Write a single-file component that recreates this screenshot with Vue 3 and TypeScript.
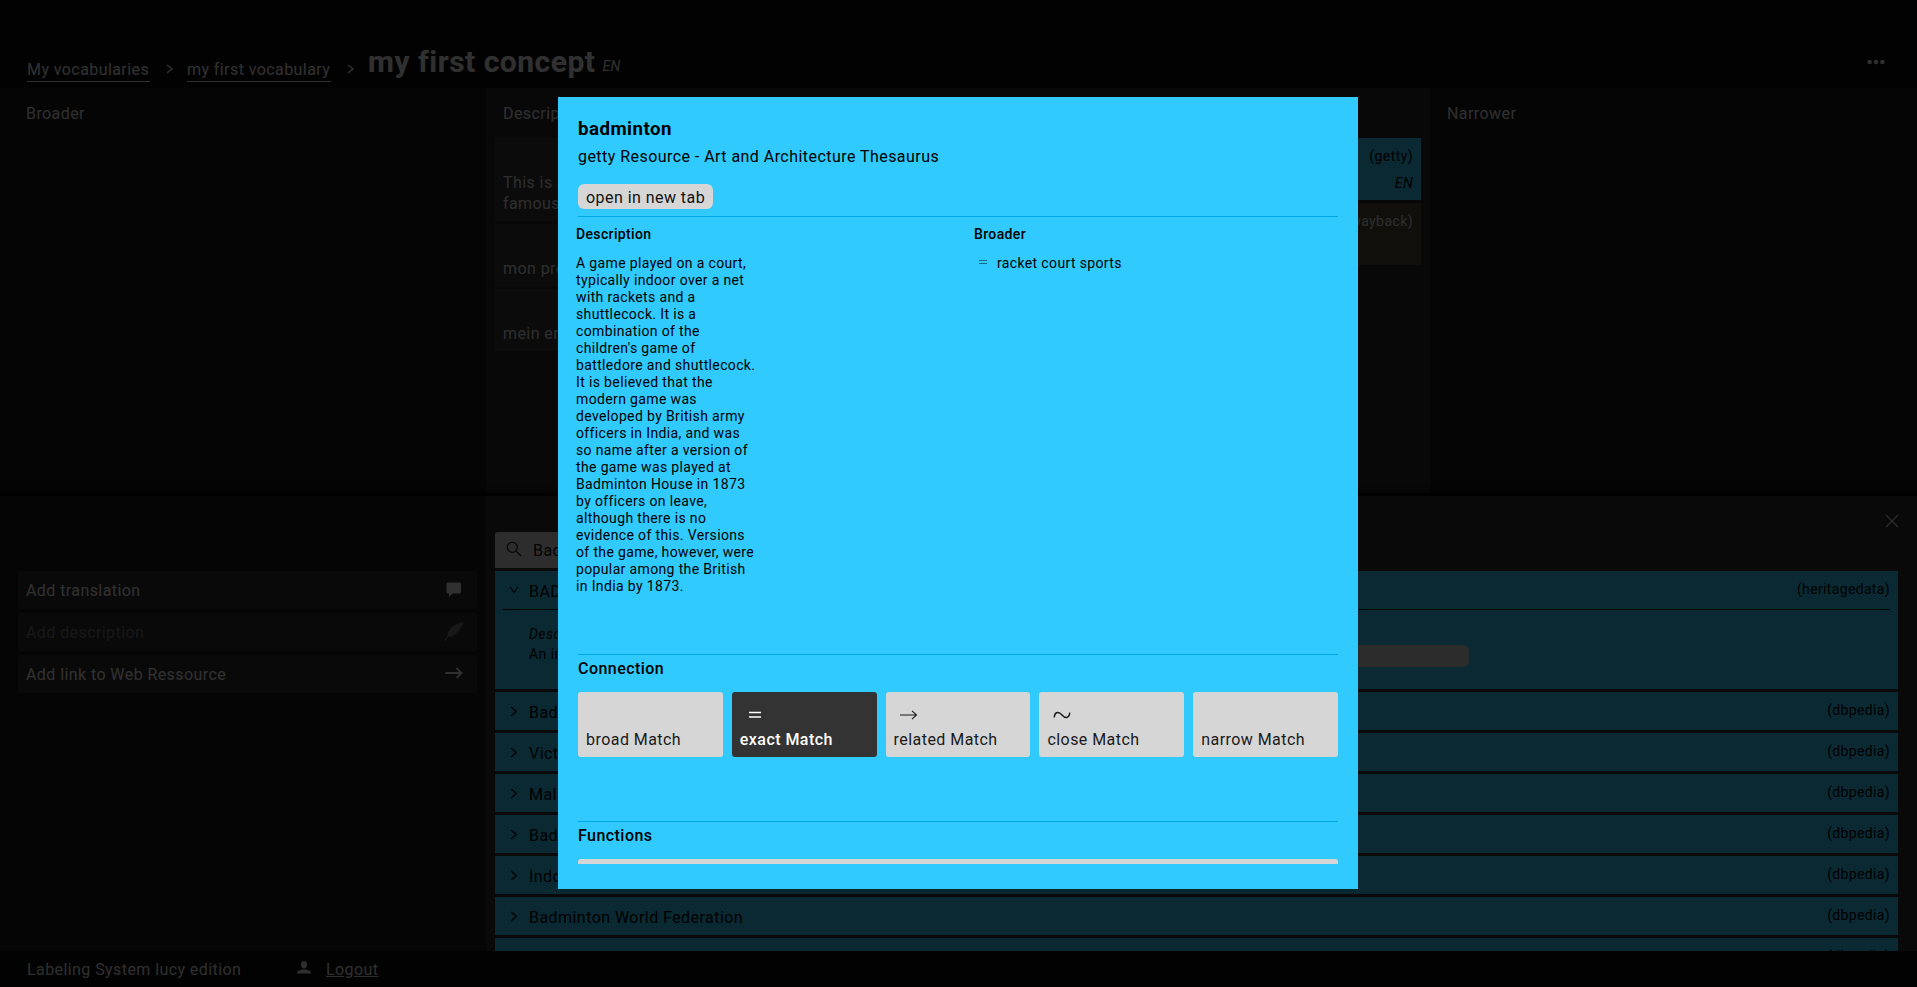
<script setup lang="ts">
interface Match {
  label: string
  icon: '' | 'equal' | 'arrow' | 'tilde'
  active?: boolean
}

interface Result {
  label: string
  source: string
}

const descriptions: string[] = ['mon premier concept', 'mein erstes Konzept']

const results: Result[] = [
  { label: 'Badminton', source: 'dbpedia' },
  { label: 'Victor', source: 'dbpedia' },
  { label: 'Malaysia', source: 'dbpedia' },
  { label: 'Badminton Asia', source: 'dbpedia' },
  { label: 'Indonesia', source: 'dbpedia' },
  { label: 'Badminton World Federation', source: 'dbpedia' },
  { label: 'Badminton', source: 'dbpedia' },
]

const matches: Match[] = [
  { label: 'broad Match', icon: '' },
  { label: 'exact Match', icon: 'equal', active: true },
  { label: 'related Match', icon: 'arrow' },
  { label: 'close Match', icon: 'tilde' },
  { label: 'narrow Match', icon: '' },
]
</script>

<template>
  <div class="app">
    <header class="top">
      <nav class="crumbs">
        <a class="crumb">My vocabularies</a>
        <svg class="sep" width="8" height="10" viewBox="0 0 8 10"><path d="M1 1l5 4-5 4" /></svg>
        <a class="crumb second">my first vocabulary</a>
        <svg class="sep" width="8" height="10" viewBox="0 0 8 10"><path d="M1 1l5 4-5 4" /></svg>
        <h1>my first concept</h1>
        <em class="lang">EN</em>
      </nav>
      <svg class="dots" width="18" height="6" viewBox="0 0 18 6">
        <circle cx="2.6" cy="3" r="2.3" /><circle cx="9" cy="3" r="2.3" /><circle cx="15.4" cy="3" r="2.3" />
      </svg>
    </header>

    <section class="upper">
      <div class="side"><h2>Broader</h2></div>
      <div class="middle">
        <div class="col">
          <h2>Description</h2>
          <div class="note tall">This is my<br />famous</div>
          <div v-for="d in descriptions" :key="d" class="note">{{ d }}</div>
        </div>
        <div class="col">
          <h2 class="spacer"></h2>
          <div class="link blue"><span>(getty)</span><em>EN</em></div>
          <div class="link brown"><span>(wayback)</span></div>
        </div>
      </div>
      <div class="side right"><h2>Narrower</h2></div>
    </section>

    <section class="lower">
      <div class="actions">
        <button class="action">
          <span>Add translation</span>
          <svg width="20" height="20" viewBox="0 0 20 20"><path class="fill" d="M4 2.500h11.500a1.500 1.500 0 0 1 1.500 1.500v8a1.500 1.500 0 0 1-1.500 1.500H8.500L5 17v-3.500H4a1.500 1.500 0 0 1-1.500-1.500V4a1.500 1.500 0 0 1 1.500-1.500z" /></svg>
        </button>
        <button class="action off">
          <span>Add description</span>
          <svg width="20" height="20" viewBox="0 0 20 20"><path class="fill" d="M19.500.300C13.500.800 7.500 4 5 9c-.8 1.600-1.200 3-1.500 4.500L.500 18.500l1 .500 3-4.700c1.700.500 3.800.400 5.500-.600l-2.200-.500 4-.900 1.500-1.500-2.300-.300 4-1.200 1-1.600-2.200-.200 3.200-1.300.8-1.500-1.700-.100 2.300-1.400z" /></svg>
        </button>
        <button class="action">
          <span>Add link to Web Ressource</span>
          <svg width="20" height="20" viewBox="0 0 20 20"><path class="line" d="M1.500 9h16M12.500 4l5 5-5 5" /></svg>
        </button>
      </div>

      <div class="browser">
        <div class="closer">
          <svg width="14" height="14" viewBox="0 0 14 14"><path d="M1 1l12 12M13 1L1 13" /></svg>
        </div>
        <div class="search">
          <svg width="16" height="16" viewBox="0 0 16 16"><circle cx="6.300" cy="6.300" r="5" /><path d="M10 10l5 5" /></svg>
          <span>Badminton</span>
        </div>
        <div class="row open">
          <div class="head">
            <svg width="10" height="8" viewBox="0 0 10 8"><path d="M1 1l4 5.500L9 1" /></svg>
            <span class="name">BADMINTON</span>
            <span class="source">(heritagedata)</span>
          </div>
          <div class="detail">
            <div><em>Description</em><p>An indoor game</p></div>
            <span class="pill"></span>
          </div>
        </div>
        <div v-for="(r, i) in results" :key="i" class="row">
          <div class="head">
            <svg width="8" height="11" viewBox="0 0 8 11"><path d="M1 1l5.500 4.500L1 10" /></svg>
            <span class="name">{{ r.label }}</span>
            <span class="source">({{ r.source }})</span>
          </div>
        </div>
      </div>
    </section>

    <footer class="bottom">
      <span>Labeling System lucy edition</span>
      <svg width="14" height="13" viewBox="0 0 14 13"><ellipse cx="7" cy="3.700" rx="3" ry="3.700" /><path d="M0 12.500c0-3 3-4 7-4s7 1 7 4z" /></svg>
      <a>Logout</a>
    </footer>

    <div class="overlay">
      <div class="modal">
        <div class="scroll">
          <h3 class="title">badminton</h3>
          <p class="sub">getty Resource - Art and Architecture Thesaurus</p>
          <button class="open-tab">open in new tab</button>
          <div class="facts">
            <div class="fact">
              <h4>Description</h4>
              <p>A game played on a court, typically indoor over a net with rackets and a shuttlecock. It is a combination of the children's game of battledore and shuttlecock. It is believed that the modern game was developed by British army officers in India, and was so name after a version of the game was played at Badminton House in 1873 by officers on leave, although there is no evidence of this. Versions of the game, however, were popular among the British in India by 1873.</p>
            </div>
            <div class="fact">
              <h4>Broader</h4>
              <div class="relation">
                <svg width="8" height="5" viewBox="0 0 8 5"><path d="M0 .500h8M0 3.500h8" /></svg>
                <span>racket court sports</span>
              </div>
            </div>
          </div>
          <section class="connection">
            <h4>Connection</h4>
            <div class="matches">
              <button v-for="m in matches" :key="m.label" class="match" :class="{ active: m.active }">
                <svg width="18" height="12" viewBox="0 0 18 12">
                  <path v-if="m.icon === 'equal'" class="thick" d="M3 3.500h12M3 8h12" />
                  <path v-else-if="m.icon === 'arrow'" d="M0 6h16.500M12 1.800L16.500 6 12 10.200" />
                  <path v-else-if="m.icon === 'tilde'" class="wave" d="M1.200 8.300C2 2.200 6 2.500 9 6s7 3.800 7.800-2.300" />
                </svg>
                <span>{{ m.label }}</span>
              </button>
            </div>
          </section>
          <section class="functions">
            <h4>Functions</h4>
            <div class="function"></div>
          </section>
        </div>
      </div>
    </div>
  </div>
</template>

<style>
body {
  margin: 0;
  overflow: hidden;
}
</style>

<style scoped>
* {
  box-sizing: border-box;
}
h1, h2, h3, h4, p {
  margin: 0;
}
button {
  border: 0;
  padding: 0;
  font: inherit;
  letter-spacing: inherit;
  text-align: left;
}
svg {
  display: block;
  flex: none;
  fill: none;
}
.app {
  display: flex;
  flex-direction: column;
  height: 100vh;
  overflow: hidden;
  background: #191919;
  color: #fff;
  font: 450 16px/20px Roboto, sans-serif;
  letter-spacing: 0.42px;
}
.top {
  display: flex;
  justify-content: space-between;
  height: 88px;
  flex: none;
  padding: 0 32px 0 27px;
  background: #0d0d0d;
  color: #f0f0f0;
}
.crumbs {
  display: flex;
  align-items: flex-start;
}
.crumb {
  width: 123px;
  margin-top: 60px;
  height: 22px;
  border-bottom: 1px solid #e6e6e6;
  white-space: nowrap;
}
.crumb.second {
  width: 144px;
}
.sep {
  margin: 64px 13px 0 16px;
  stroke: #e6e6e6;
  stroke-width: 1.600;
}
h1 {
  margin-top: 42px;
  font-size: 30px;
  line-height: 40px;
  font-weight: 700;
  letter-spacing: 0.5px;
}
.lang {
  margin: 56px 0 0 7px;
  font-size: 14px;
}
.dots {
  margin-top: 59px;
  fill: #e6e6e6;
}
.upper {
  display: flex;
  flex: none;
  height: 408px;
  border-bottom: 3px solid #000;
}
.side {
  width: 486px;
  padding: 16px 26px;
}
.side.right {
  width: 487px;
  padding-left: 17px;
}
h2 {
  font-size: 16px;
  line-height: 20px;
  font-weight: inherit;
  color: #e6e6e6;
}
.middle {
  display: flex;
  gap: 8px;
  width: 944px;
  padding: 16px 9px 0;
  background: #2a2a2a;
}
.col {
  display: flex;
  flex-direction: column;
  gap: 3px;
  flex: 1;
}
.col h2 {
  height: 31px;
  padding-left: 8px;
}
.note {
  display: flex;
  align-items: flex-end;
  height: 62px;
  padding: 0 8px 7px;
  line-height: 21px;
  background: #373737;
  color: #e0e0e0;
}
.note.tall {
  height: 83px;
}
.link {
  display: flex;
  flex-direction: column;
  align-items: flex-end;
  gap: 7px;
  height: 62px;
  padding: 8px 8px 0;
  font-size: 14px;
}
.link.blue {
  background: #33ccff;
  color: #000;
  font-weight: 400;
}
.link.brown {
  background: #504a3c;
  color: #e6e6e6;
}
.lower {
  display: flex;
  flex: 1;
  min-height: 0;
  box-shadow: 0 -3px 8px #000;
}
.actions {
  display: flex;
  flex-direction: column;
  gap: 4px;
  width: 486px;
  padding: 75px 9px 0 18px;
}
.action {
  display: flex;
  align-items: center;
  justify-content: space-between;
  height: 38px;
  padding: 0 13px 0 8px;
  border-radius: 3px;
  background: #2d2d2d;
  color: #f0f0f0;
}
.action span {
  padding-top: 2px;
}
.action.off {
  color: #787878;
}
.action .fill {
  fill: currentColor;
}
.action .line {
  stroke: currentColor;
  stroke-width: 1.800;
}
.browser {
  display: flex;
  flex-direction: column;
  gap: 3px;
  flex: 1;
  min-width: 0;
  padding: 0 19px 0 9px;
  overflow: hidden;
  background: #2d2d2d;
  font-weight: 400;
  letter-spacing: 0.45px;
}
.closer {
  display: flex;
  justify-content: flex-end;
  flex: none;
  height: 33px;
  padding-top: 18px;
  margin-right: -1px;
}
.closer svg {
  stroke: #ddd;
  stroke-width: 1.200;
}
.search {
  display: flex;
  flex: none;
  align-items: center;
  gap: 11px;
  width: 465px;
  height: 36px;
  padding: 2px 0 0 11px;
  border-radius: 3px 3px 0 0;
  background: #e0e0e0;
  color: #111;
}
.search svg {
  margin-top: -4px;
  stroke: #222;
  stroke-width: 1.300;
}
.row {
  flex: none;
  height: 38px;
  padding: 0 8px;
  background: #33ccff;
  color: #000;
}
.row.open {
  height: 118px;
}
.head {
  display: flex;
  align-items: center;
  height: 38px;
}
.head svg {
  width: 10px;
  margin: 0 10px 0 6px;
  stroke: #000;
  stroke-width: 1.200;
}
.name {
  flex: 1;
  padding-top: 3px;
}
.source {
  font-size: 14px;
  letter-spacing: 0.35px;
  margin-top: -2px;
}
.row.open .head {
  height: 39px;
  border-bottom: 1px solid #000;
}
.detail {
  display: flex;
  align-items: flex-start;
  justify-content: space-between;
  padding: 14px 421px 0 26px;
  font-size: 14px;
}
.pill {
  width: 180px;
  height: 22px;
  margin-top: 21px;
  border-radius: 6px;
  background: #dcdcdc;
}
.bottom {
  display: flex;
  flex: none;
  height: 36px;
  padding: 9px 27px 0;
  background: #0a0a0a;
  color: #e6e6e6;
}
.bottom span {
  width: 215px;
  white-space: nowrap;
}
.bottom svg {
  margin: 1px 15px 0 55px;
  fill: #e6e6e6;
}
.bottom a {
  text-decoration: underline;
}
.overlay {
  position: fixed;
  inset: 0;
  display: flex;
  align-items: flex-start;
  padding: 97px 0 0 558px;
  background: rgba(0, 0, 0, 0.8);
  color: #000;
  font-weight: 400;
  letter-spacing: 0.45px;
}
.modal {
  width: 800px;
  height: 792px;
  padding: 20px 15px 25px;
  background: #30caff;
}
.scroll {
  height: 747px;
  padding: 0 5px;
  overflow: hidden;
}
.title {
  font-size: 18.720px;
  line-height: 24px;
  font-weight: 700;
}
.sub {
  margin-top: 6px;
}
.open-tab {
  display: block;
  width: 135px;
  height: 25px;
  margin: 17px 0 7px;
  padding: 2px 0 0 8px;
  border-radius: 6px;
  background: #d6d6d6;
  color: #111;
}
.facts {
  display: flex;
  height: 438px;
  border-top: 1px solid #00a8e6;
  font-size: 14px;
  line-height: 17px;
  letter-spacing: 0.36px;
}
.fact {
  flex: none;
  width: 398px;
  margin-left: -2px;
  padding-top: 9px;
}
.fact + .fact {
  width: 360px;
  margin-left: 0;
}
.fact p {
  width: 182px;
}
h4 {
  font-weight: 500;
}
.fact h4 {
  margin-bottom: 12px;
}
.relation {
  display: flex;
  gap: 10px;
  padding-left: 5px;
}
.relation svg {
  margin-top: 5px;
  stroke: #176a8a;
}
.connection,
.functions {
  border-top: 1px solid #00a8e6;
}
.connection {
  height: 167px;
}
.connection h4,
.functions h4 {
  padding-top: 4px;
  height: 37px;
}
.matches {
  display: grid;
  grid-template-columns: repeat(5, 1fr);
  gap: 9px;
}
.match {
  display: flex;
  flex-direction: column;
  gap: 9px;
  height: 65px;
  padding: 17px 8px 0;
  border-radius: 3px;
  background: #d6d6d6;
  color: #1a1a1a;
}
.match svg {
  margin-left: 6px;
  stroke: currentColor;
  stroke-width: 1.100;
}
.match .thick {
  stroke-width: 1.500;
}
.match .wave {
  stroke-width: 1.500;
}
.match.active {
  background: #333;
  color: #fff;
  font-weight: 500;
}
.function {
  height: 38px;
  border-radius: 3px;
  background: #d6d6d6;
}
</style>
